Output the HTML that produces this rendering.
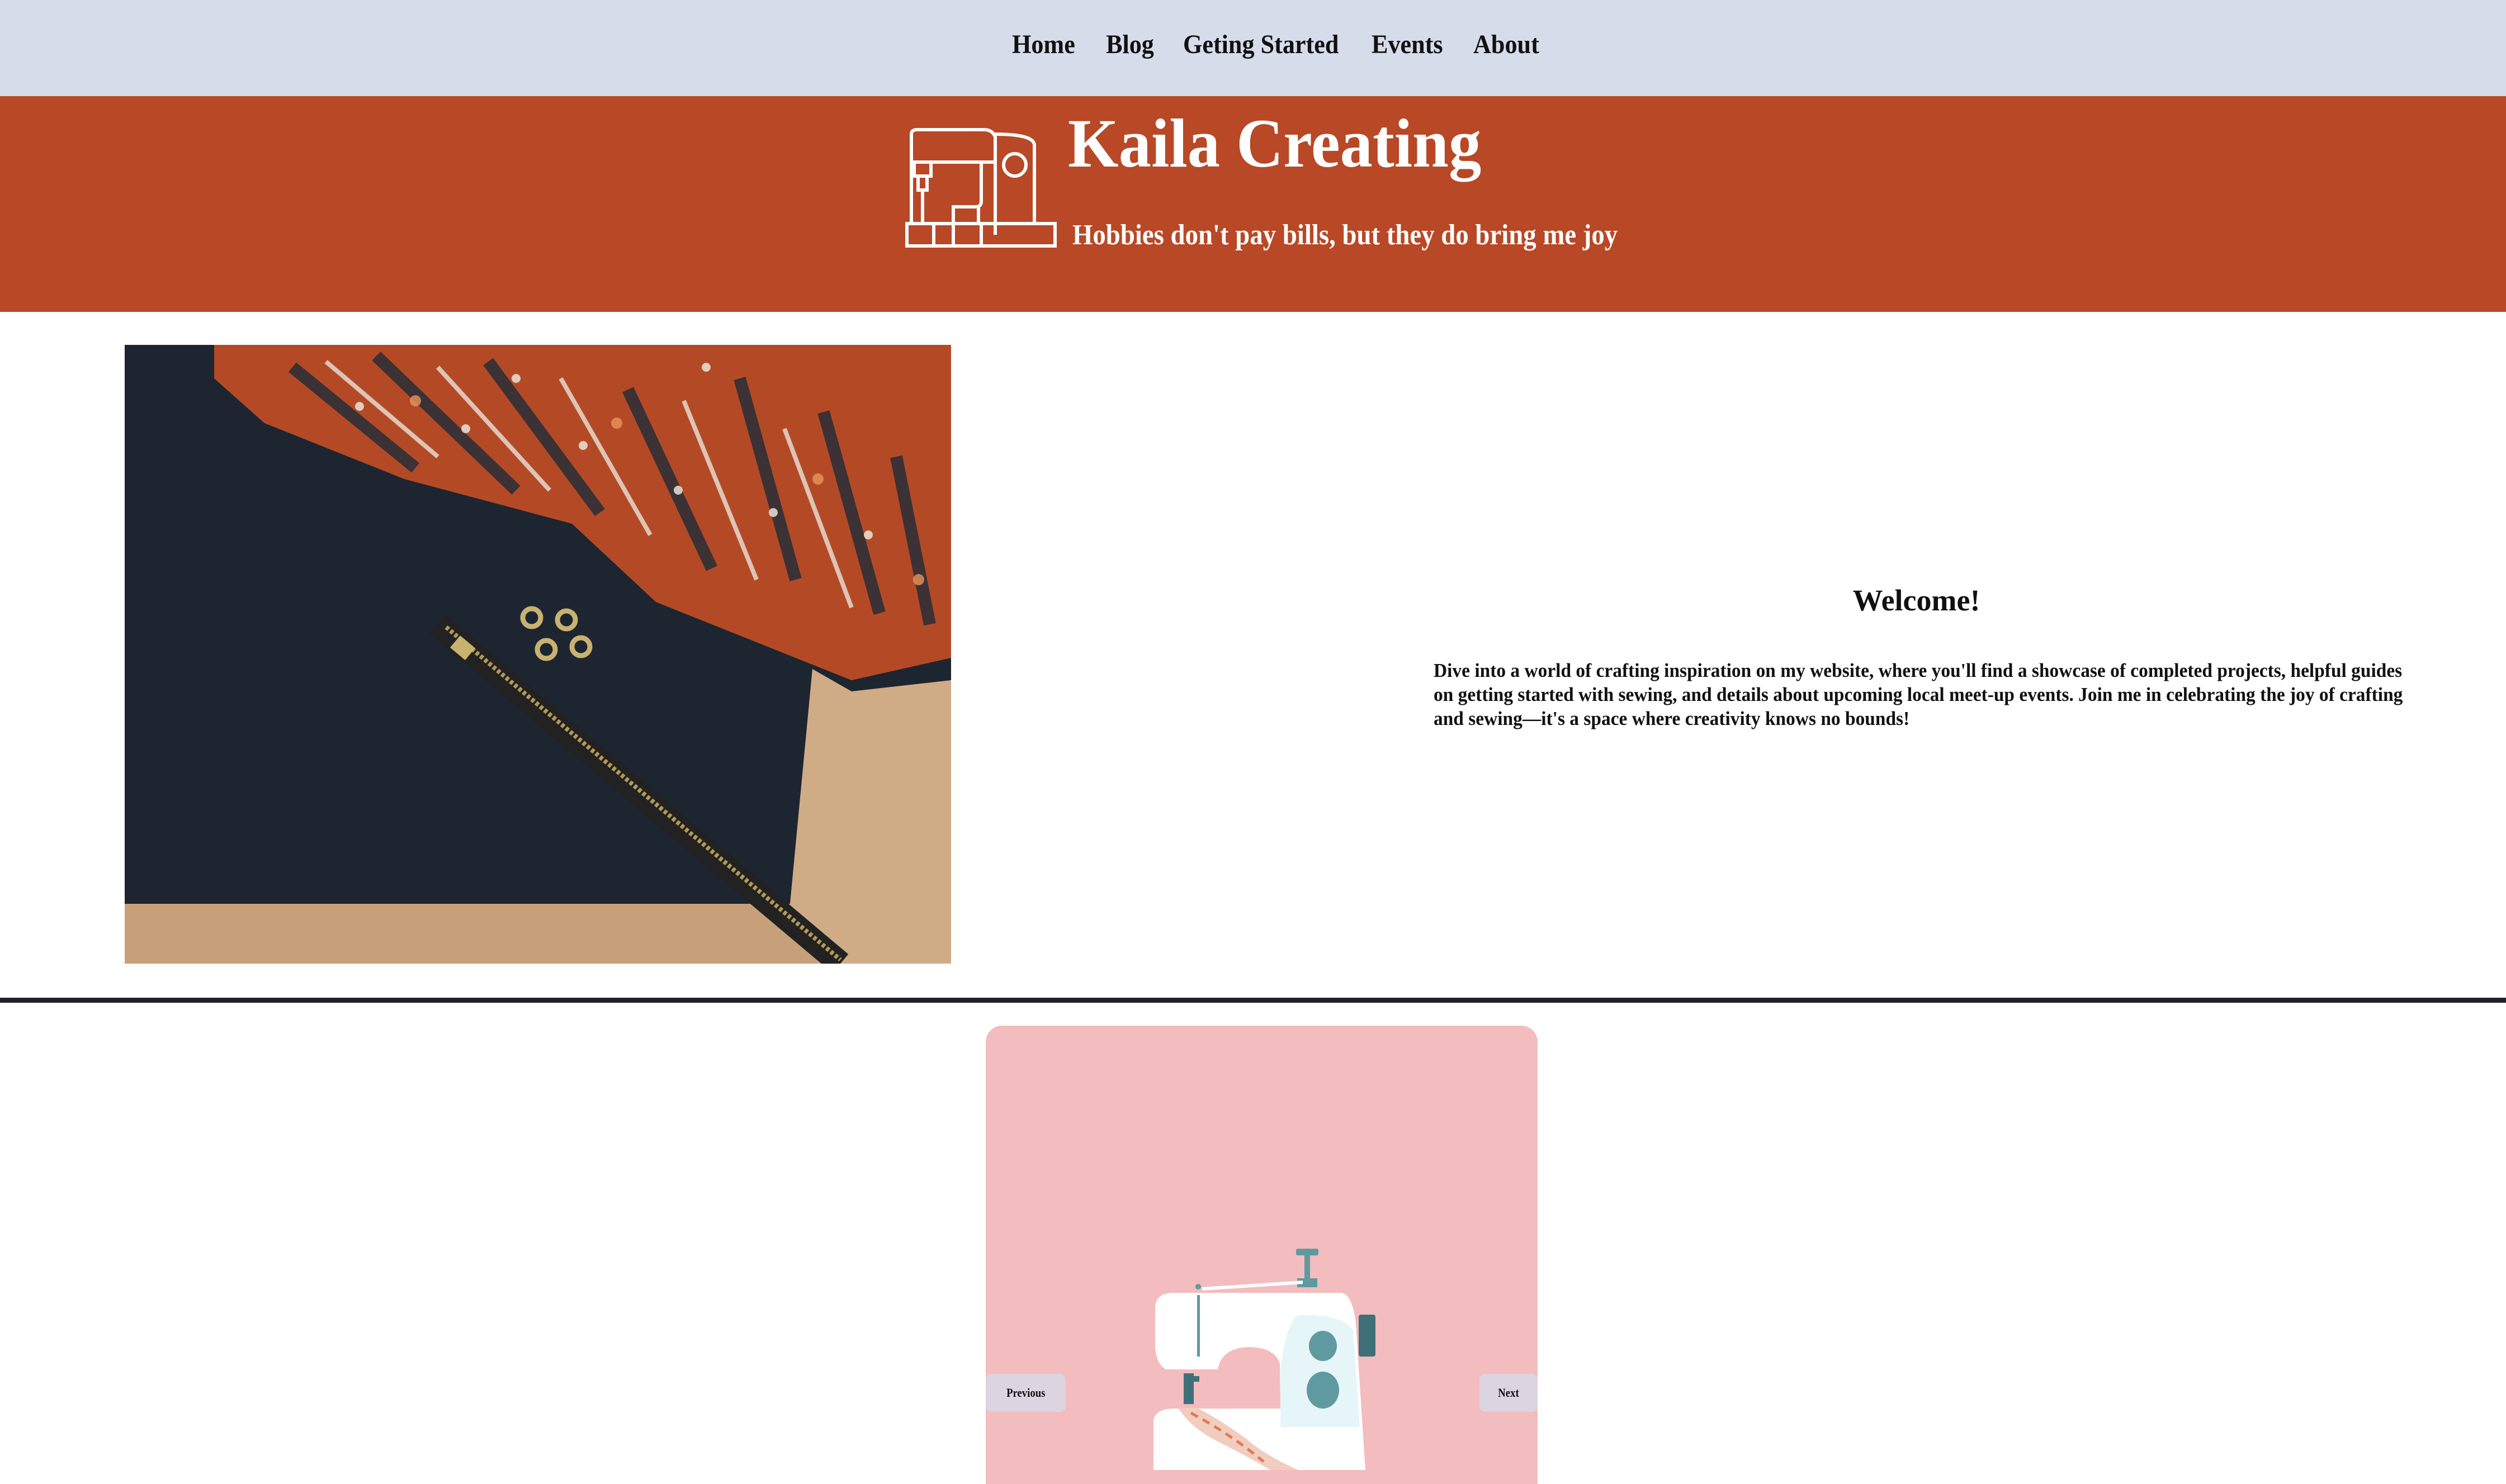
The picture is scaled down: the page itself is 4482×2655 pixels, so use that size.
<!DOCTYPE html>
<html><head><meta charset="utf-8"><style>
html,body{margin:0;padding:0;}
body{width:4482px;height:2630px;overflow:hidden;background:#fff;font-family:"Liberation Serif",serif;position:relative;}
.abs{position:absolute;}
.nav{left:0;top:0;width:4482px;height:172px;background:#d6dcea;}
.nav span{position:absolute;top:52px;font-size:48px;font-weight:bold;color:#111;transform:scaleX(0.92);transform-origin:left;white-space:nowrap;}
.hdr{left:0;top:172px;width:4482px;height:386px;background:#b84826;}
.sq{white-space:nowrap;transform-origin:left top;display:inline-block;}
.para{left:2564px;font-size:35px;font-weight:bold;color:#111;}
.btn{background:#dcd4e0;border-radius:10px;font-size:22px;font-weight:bold;color:#111;text-align:center;line-height:68px;}
</style></head><body>
<div class="abs nav">
<span style="left:1810px">Home</span>
<span style="left:1978px">Blog</span>
<span style="left:2116px">Geting Started</span>
<span style="left:2453px">Events</span>
<span style="left:2635px">About</span>
</div>
<div class="abs hdr"></div>
<svg class="abs" style="left:1610px;top:220px" width="280" height="235" viewBox="0 0 280 235" fill="none" stroke="#fff" stroke-width="6">
<path d="M20 20 Q20 12 30 12 L150 12 Q165 12 170 25 L170 200"/>
<path d="M20 20 L20 70 L170 70"/>
<path d="M20 70 L20 180"/>
<rect x="12" y="180" width="265" height="40"/>
<path d="M60 180 L60 220 M95 180 L95 220 M145 180 L145 220"/>
<path d="M95 180 L95 150 L140 150 L140 180"/>
<path d="M145 70 L145 140 Q145 150 135 150"/>
<circle cx="205" cy="75" r="20"/>
<path d="M25 70 L25 95 L55 95 L55 70 M32 95 L32 120 L48 120 L48 95 M40 120 L40 180"/>
<path d="M170 20 Q240 20 240 40 L240 180" />
</svg>
<div class="abs" style="left:1910px;top:186px;font-size:124px;font-weight:bold;color:#fff;"><span class="sq" style="transform:scaleX(0.94)">Kaila Creating</span></div>
<div class="abs" style="left:1918px;top:391px;font-size:52px;font-weight:bold;color:#fff;"><span class="sq" style="transform:scaleX(0.90)">Hobbies don't pay bills, but they do bring me joy</span></div>

<svg class="abs" style="left:223px;top:617px" width="1478" height="1107" viewBox="0 0 1478 1107">
<rect width="1478" height="1107" fill="#c9a47e"/>
<path d="M0 0 L1478 0 L1478 600 L1300 620 L1230 580 L1190 1000 L0 1000 Z" fill="#1d2531"/>
<path d="M0 1000 L1190 1000 L1240 1107 L0 1107 Z" fill="#c7a07a"/>
<path d="M160 0 L1478 0 L1478 560 L1300 600 L1100 520 L950 460 L800 320 L500 240 L250 140 L160 60 Z" fill="#b44a25"/>
<g stroke="#1e2a3a" stroke-width="22" fill="none" opacity=".8">
<path d="M300 40 L520 220 M450 20 L700 260 M650 30 L850 300 M900 80 L1050 400 M1100 60 L1200 420 M1250 120 L1350 480 M1380 200 L1440 500"/>
</g>
<g stroke="#e7e2da" stroke-width="8" fill="none" opacity=".8">
<path d="M360 30 L560 200 M560 40 L760 260 M780 60 L940 340 M1000 100 L1130 420 M1180 150 L1300 470"/>
</g>
<g fill="#e9e3d8" opacity=".85"><circle cx="420" cy="110" r="8"/><circle cx="610" cy="150" r="8"/><circle cx="820" cy="180" r="8"/><circle cx="990" cy="260" r="8"/><circle cx="1160" cy="300" r="8"/><circle cx="1330" cy="340" r="8"/><circle cx="700" cy="60" r="8"/><circle cx="1040" cy="40" r="8"/></g>
<g fill="#e8955e" opacity=".8"><circle cx="520" cy="100" r="10"/><circle cx="880" cy="140" r="10"/><circle cx="1240" cy="240" r="10"/><circle cx="1420" cy="420" r="10"/></g>
<path d="M1230 580 L1300 620 L1478 600 L1478 1107 L1240 1107 L1190 1000 Z" fill="#cfab86"/>
<path d="M560 500 L1280 1107" stroke="#222" stroke-width="44"/>
<path d="M575 505 L1280 1100" stroke="#b39a55" stroke-width="8" stroke-dasharray="6 4"/>
<rect x="600" y="520" width="35" height="28" fill="#c9b170" transform="rotate(40 600 520)"/>
<g fill="none" stroke="#c9b170" stroke-width="9"><circle cx="728" cy="488" r="16"/><circle cx="790" cy="492" r="16"/><circle cx="754" cy="545" r="16"/><circle cx="816" cy="540" r="16"/></g>
</svg>

<div class="abs" style="left:0;top:1043px;width:6855px;text-align:center;font-size:54px;font-weight:bold;color:#111;">Welcome!</div>
<div class="abs para" style="top:1180px"><span class="sq" style="transform:scaleX(0.955)">Dive into a world of crafting inspiration on my website, where you'll find a showcase of completed projects, helpful guides</span></div>
<div class="abs para" style="top:1223px"><span class="sq" style="transform:scaleX(0.955)">on getting started with sewing, and details about upcoming local meet-up events. Join me in celebrating the joy of crafting</span></div>
<div class="abs para" style="top:1266px"><span class="sq" style="transform:scaleX(0.955)">and sewing—it's a space where creativity knows no bounds!</span></div>

<div class="abs" style="left:0;top:1785px;width:4482px;height:9px;background:#1f2328;"></div>

<div class="abs" style="left:1763px;top:1835px;width:987px;height:820px;background:#f3bcbe;border-radius:29px 29px 0 0;overflow:hidden;">
<svg class="abs" style="left:0;top:0" width="987" height="820" viewBox="1763 1835 987 820">
<rect x="2318" y="2234" width="40" height="12" rx="3" fill="#5f9aa0"/>
<rect x="2333" y="2244" width="10" height="50" fill="#5f9aa0"/>
<rect x="2320" y="2287" width="36" height="16" fill="#5f9aa0"/>
<path d="M2150 2306 L2330 2294" stroke="#fff" stroke-width="6"/>
<circle cx="2143" cy="2302" r="5" fill="#5f9aa0"/>
<path d="M2066 2340 Q2066 2313 2100 2313 L2400 2313 Q2420 2318 2425 2370 L2442 2630 L2063 2630 L2063 2540 Q2068 2520 2100 2520 L2290 2520 L2289 2440 Q2280 2410 2232 2410 Q2185 2412 2178 2450 L2085 2450 Q2068 2440 2066 2410 Z" fill="#fff"/>
<path d="M2320 2353 Q2400 2350 2420 2380 L2432 2553 L2290 2553 L2290 2450 Q2300 2370 2320 2353 Z" fill="#e6f5f8"/>
<rect x="2430" y="2352" width="30" height="75" rx="4" fill="#3f7078"/>
<ellipse cx="2366" cy="2408" rx="25" ry="27" fill="#5f9aa0"/>
<ellipse cx="2366" cy="2487" rx="29" ry="33" fill="#5f9aa0"/>
<rect x="2141" y="2317" width="5" height="110" fill="#5f9aa0"/>
<rect x="2117" y="2457" width="18" height="55" fill="#3f7078"/>
<rect x="2131" y="2462" width="14" height="10" fill="#3f7078"/>
<path d="M2108 2520 L2140 2518 Q2190 2545 2230 2575 Q2265 2605 2322 2630 L2272 2630 Q2230 2605 2180 2580 Q2130 2555 2108 2520 Z" fill="#f0cdbf"/>
<path d="M2130 2528 Q2200 2565 2260 2615" stroke="#e27a55" stroke-width="5" stroke-dasharray="14 10" fill="none"/>
</svg>
<div class="abs btn" style="left:0;top:623px;width:143px;height:68px"><span class="sq" style="transform:scaleX(0.85);transform-origin:center">Previous</span></div>
<div class="abs btn" style="left:883px;top:623px;width:104px;height:68px"><span class="sq" style="transform:scaleX(0.85);transform-origin:center">Next</span></div>
</div>
</body></html>
